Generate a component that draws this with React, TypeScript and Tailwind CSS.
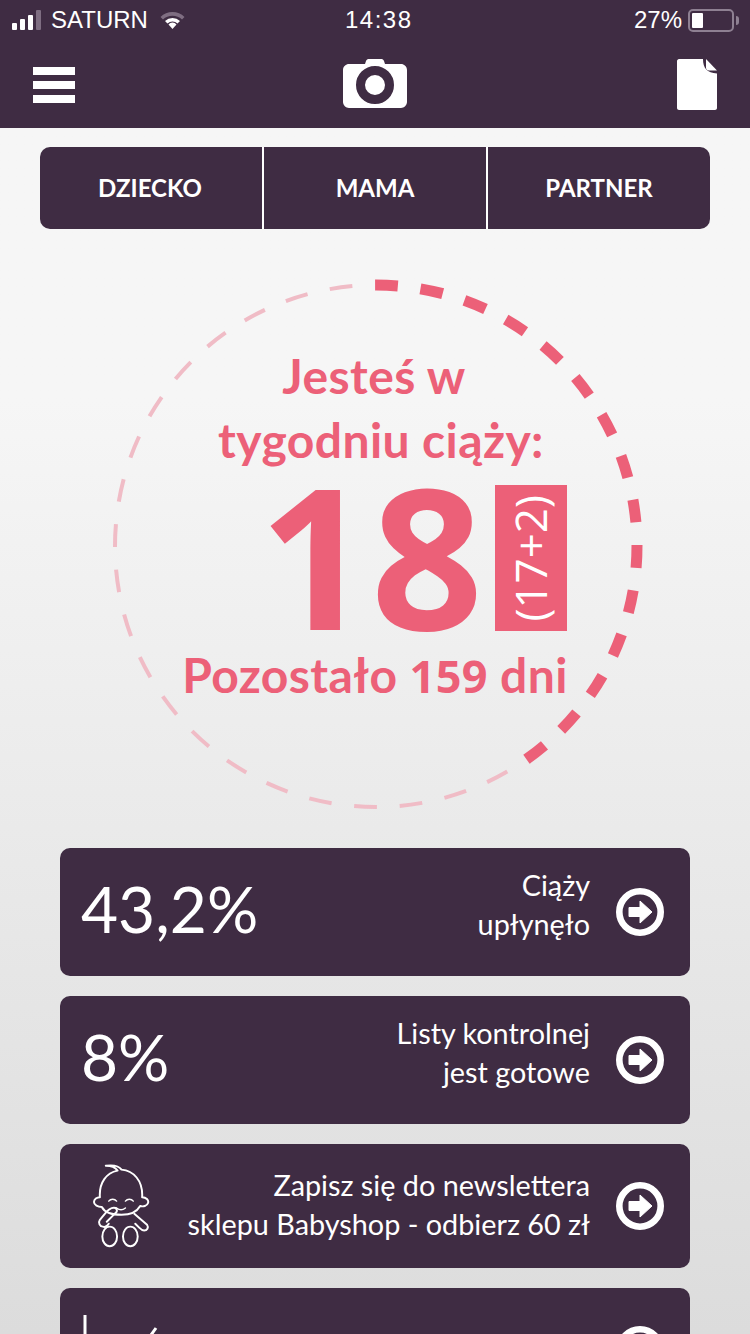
const Arrow = () => (
  <svg width="48" height="48" viewBox="0 0 48 48" className="shrink-0">
    <circle cx="24" cy="24" r="20.7" fill="none" stroke="#fff" strokeWidth="6.600" />
    <path d="M13 19.500h11V13l12 11-12 11v-6.500H13z" fill="#fff" stroke="#fff" strokeWidth="1" strokeLinejoin="round" />
  </svg>
);

const Baby = () => (
  <svg width="57" height="84" viewBox="-1 0 58 84" fill="none" stroke="#fff" strokeWidth="2" strokeLinecap="round" strokeLinejoin="round">
    <path d="M6 33C5 18 13 8 24 6C22 3 19 1 12 1C20 0 26 2 28 5C40 6 50 16 49 33C53 33 56 36 55 39C54 42 50 43 47 42C43 49 36 51 28 51C18 51 11 49 8 43C4 43 0 41 0 38C0 35 3 33 6 33Z" />
    <path d="M15 37c2-2.500 6-2.500 8 0M32 37c2-2.500 6-2.500 8 0M23 44c3 2.500 6 2.500 9 0" strokeWidth="1.500" />
    <path d="M22 44C18 43 14 46 11 50L6 56C4 59 6 63 9 63C11 64 13 63 15 60" />
    <path d="M22 44C24 46 24 48 21 50L13 58" />
    <path d="M41 50L54 61C56 64 54 67 51 67C50 67 48 66 46 64L42 60" />
    <ellipse cx="16" cy="73" rx="7.500" ry="10" />
    <ellipse cx="37" cy="73" rx="7.500" ry="10" />
  </svg>
);

const rows = [
  { left: "43,2%", lines: ["Ciąży", "upłynęło"] },
  { left: "8%", lines: ["Listy kontrolnej", "jest gotowe"] },
];

const dashes = Array.from({ length: 36 }, (_, i) => i);

function arc(i: number) {
  const cx = 267, cy = 267, r = 261;
  const a0 = ((i * 10 - 0.2 - 90) * Math.PI) / 180;
  const a1 = ((i * 10 + 4.8 - 90) * Math.PI) / 180;
  return `M${cx + r * Math.cos(a0)} ${cy + r * Math.sin(a0)}A${r} ${r} 0 0 1 ${cx + r * Math.cos(a1)} ${cy + r * Math.sin(a1)}`;
}

export default function App() {
  return (
    <div className="h-[1334px] overflow-hidden bg-gradient-to-b from-[#f6f6f6] from-[30%] to-[#dcdcdc] font-['Lato',sans-serif]">
      <header className="h-[128px] bg-[#3f2c43] text-white">
        <div className="flex h-10 items-center pl-3 pr-[11px] font-['Liberation_Sans',sans-serif] text-[24px]">
          <div className="flex items-end gap-[3px]">
            <span className="h-[7px] w-[5px] rounded-[1px] bg-white" />
            <span className="h-[11px] w-[5px] rounded-[1px] bg-white" />
            <span className="h-[15px] w-[5px] rounded-[1px] bg-white" />
            <span className="h-[20px] w-[5px] rounded-[1px] bg-[#7f6e82]" />
          </div>
          <span className="ml-[10px] w-[100px]">SATURN</span>
          <svg width="27" height="20" viewBox="0 0 26 20" className="ml-[8px]">
            <path d="M1 7a17 17 0 0 1 24 0l-2.500 2.500a14 14 0 0 0-19 0z" fill="#7f6e82" />
            <path d="M5.500 11a11 11 0 0 1 15 0L18 13.500a7.500 7.500 0 0 0-10 0z" fill="#fff" />
            <path d="M9 14.500a5 5 0 0 1 8 0L13 19z" fill="#fff" />
          </svg>
          <span className="ml-[159px] font-medium tracking-[1.500px]">14:38</span>
          <span className="ml-auto">27%</span>
          <div className="ml-[6px] flex h-[23px] w-[46px] items-center rounded-[5px] border-2 border-[#8e8092] pl-[2px]">
            <span className="h-[15px] w-[11px] rounded-[1px] bg-white" />
          </div>
          <span className="ml-[2px] h-[9px] w-[3px] rounded-r bg-[#8e8092]" />
        </div>
        <nav className="flex h-[88px] items-center justify-between pl-[33px] pr-[33px]">
          <div className="mt-[2px] flex w-[42px] flex-col gap-[6px]">
            <span className="h-[8px] bg-white" />
            <span className="h-[8px] bg-white" />
            <span className="h-[8px] bg-white" />
          </div>
          <svg width="64" height="49" viewBox="0 0 64 49" className="mt-[-1px] ml-[-3px]">
            <path d="M6 5h16l1-3c.5-1 1-2 2.500-2h13c1.500 0 2 1 2.500 2l1 3h16c3 0 6 2.500 6 6v32c0 3-3 6-6 6H6c-3 0-6-3-6-6V11c0-3.500 3-6 6-6z" fill="#fff" />
            <circle cx="32" cy="26" r="14.500" fill="none" stroke="#3f2c43" strokeWidth="9" />
          </svg>
          <svg width="40" height="51" viewBox="0 0 40 51" className="mt-[1px]">
            <path d="M2 0h24c0 9 4 14 14 14.500V49c0 1-1 2-2 2H2c-1 0-2-1-2-2V2c0-1 1-2 2-2z" fill="#fff" />
            <path d="M29 0l11 11.500H32c-2 0-3-1-3-3z" fill="#fff" />
          </svg>
        </nav>
      </header>

      <div className="mx-10 mt-[19px] flex h-[82px] divide-x-2 divide-white overflow-hidden rounded-[10px] bg-[#3f2c43] text-[24px] font-bold text-white">
        <div className="flex w-[224px] items-center justify-center pr-[2px]">DZIECKO</div>
        <div className="flex w-[224px] items-center justify-center">MAMA</div>
        <div className="flex flex-1 items-center justify-center">PARTNER</div>
      </div>

      <section className="relative h-[619px] pt-[115px] text-[#ec6078]">
        <svg width="534" height="534" viewBox="0 0 534 534" fill="none" className="absolute left-[109px] top-[50px]">
          {dashes.map((i) => (
            <path key={i} d={arc(i)} stroke={i < 15 ? "#ec6078" : "#f0bcc6"} strokeWidth={i < 15 ? 11 : 4} />
          ))}
        </svg>
        <div className="relative text-center text-[48px] font-bold leading-[64px] tracking-[0.4px]">
          <p className="ml-[-2px]">Jesteś w</p>
          <p className="ml-[12px]">tygodniu ciąży:</p>
        </div>
        <div className="relative mt-[13px] flex h-[148px] pl-[259px]">
          <span className="mt-[-5px] w-[236px] font-['Open_Sans',sans-serif] text-[196px] font-bold leading-[148px] tracking-[0px]">18</span>
          <span className="flex h-[146px] w-[72px] items-center justify-center bg-[#ec6078] pr-[2px] font-['Open_Sans',sans-serif] text-[44px] font-normal text-white">
            <span className="rotate-180 [writing-mode:vertical-rl]">(17+2)</span>
          </span>
        </div>
        <p className="relative mt-[10px] text-center text-[48px] font-bold leading-[64px] tracking-[0.4px]">
          Pozostało <span className="font-['Open_Sans',sans-serif] text-[45px] font-bold">159</span> dni
        </p>
      </section>

      <div className="flex flex-col gap-5 px-[60px] text-white">
        {rows.map((r) => (
          <div key={r.left} className="flex h-[128px] items-center rounded-[10px] bg-[#3f2c43] pl-[21px] pr-[26px]">
            <span className="mb-[6px] flex-1 text-[64px]">{r.left}</span>
            <div className="mb-[14px] mr-[26px] text-right text-[28.800px] leading-[39px]">
              {r.lines.map((l) => (
                <p key={l}>{l}</p>
              ))}
            </div>
            <Arrow />
          </div>
        ))}
        <div className="flex h-[124px] items-center rounded-[10px] bg-[#3f2c43] pl-[33px] pr-[26px]">
          <Baby />
          <div className="mb-[2px] mr-[26px] flex-1 text-right text-[28.800px] leading-[39px]">
            <p>Zapisz się do newslettera</p>
            <p>sklepu Babyshop - odbierz 60 zł</p>
          </div>
          <Arrow />
        </div>
        <div className="flex h-[124px] items-center rounded-[10px] bg-[#3f2c43] pl-[21px] pr-[26px]">
          <svg width="80" height="80" viewBox="0 0 80 80" fill="none" stroke="#fff" strokeWidth="3" className="shrink-0">
            <path d="M4 5v70M75 18l-10 14" />
          </svg>
          <div className="flex-1" />
          <Arrow />
        </div>
      </div>
    </div>
  );
}
